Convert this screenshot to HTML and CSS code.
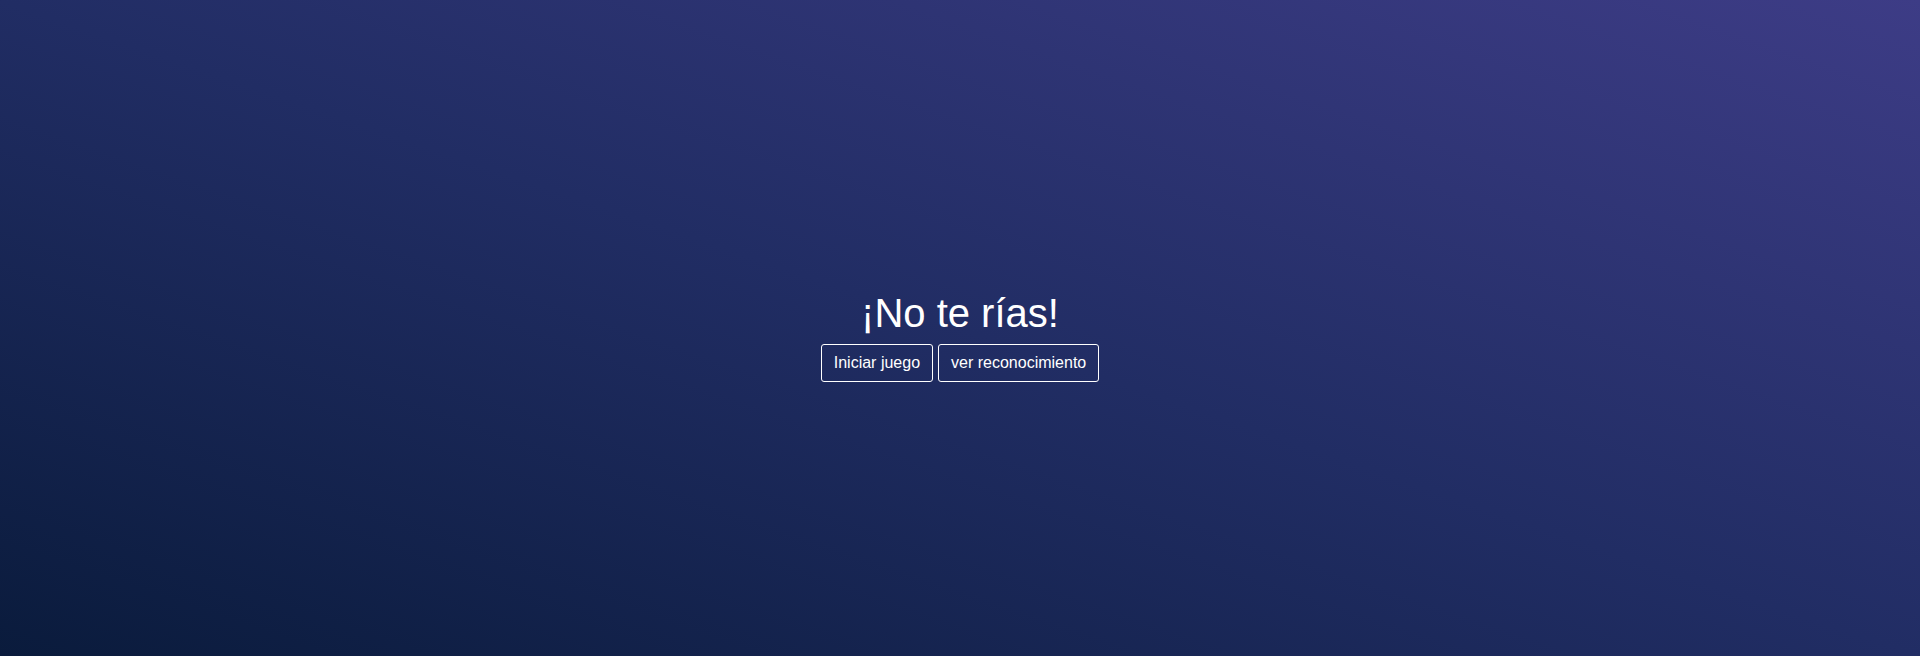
FILE: index.html
```html
<!DOCTYPE html>
<html lang="es">
<head>
<meta charset="utf-8">
<title>¡No te rías!</title>
<link rel="stylesheet" href="styles.css">
</head>
<body>
<main class="screen">
  <h1 class="title">¡No te rías!</h1>
  <div class="actions">
    <button class="btn btn-start">Iniciar juego</button>
    <button class="btn btn-recog">ver reconocimiento</button>
  </div>
</main>
</body>
</html>
```

FILE: styles.css
```css
html, body {
  margin: 0;
  padding: 0;
  height: 100%;
}
body {
  background: linear-gradient(to top right, #0a1b3c 0%, #212d64 50%, #3d3c86 100%);
  color: #ffffff;
  font-family: "Liberation Sans", Arial, sans-serif;
}
.screen {
  box-sizing: border-box;
  height: 100%;
  padding-top: 15px;
  display: flex;
  flex-direction: column;
  align-items: center;
  justify-content: center;
}
.title {
  margin: 0 0 8px 0;
  font-size: 40px;
  font-weight: 400;
  line-height: 46px;
}
.actions {
  display: flex;
  gap: 5px;
}
.btn {
  font-family: "Liberation Sans", Arial, sans-serif;
  font-size: 16px;
  line-height: 18px;
  color: #ffffff;
  background: transparent;
  border: 1px solid #ffffff;
  border-radius: 3px;
  padding: 9px 12px;
}
```
